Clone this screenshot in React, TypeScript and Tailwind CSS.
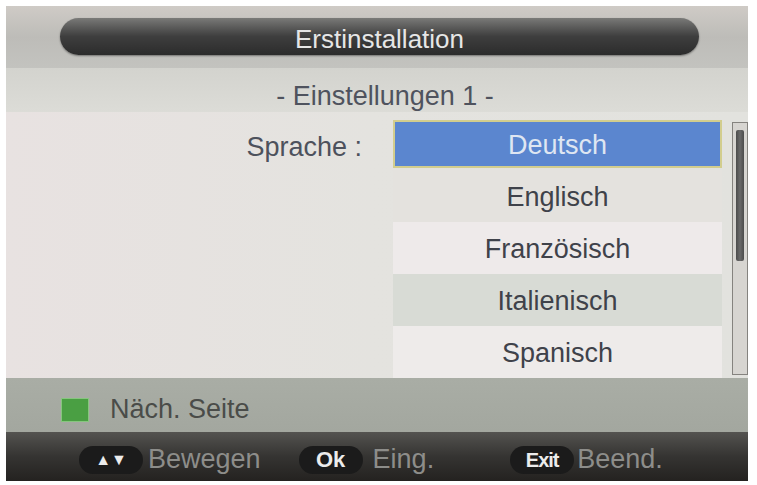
import React from 'react'

const languages = [
  { name: 'Deutsch', bg: '' },
  { name: 'Englisch', bg: 'bg-[#e4e2de]' },
  { name: 'Französisch', bg: 'bg-[#eeeaea]' },
  { name: 'Italienisch', bg: 'bg-[#d8dbd5]' },
  { name: 'Spanisch', bg: 'bg-[#eeebea]' },
]

function KeyPill({ children }: { children: React.ReactNode }) {
  return (
    <span className="flex h-[28px] w-[64px] items-center justify-center rounded-full bg-[#1b1b1b] text-[22px] font-bold text-[#ececec]">
      {children}
    </span>
  )
}

export default function App() {
  return (
    <div className="h-[485px] w-[757px] bg-white pl-[6px] pt-[6px] font-['Liberation_Sans',Arial,sans-serif]">
      <div className="flex h-[475px] w-[742px] flex-col overflow-hidden">
        {/* title bar */}
        <div className="flex h-[62px] items-center bg-gradient-to-b from-[#cfcbc6] via-[#bdbcb8] to-[#c3c3bf] pl-[54px]">
          <div className="flex h-[37px] w-[639px] items-center justify-center rounded-full bg-gradient-to-b from-[#7a7a78] via-[#3e3e3e] to-[#2c2c2c] pt-[4px] shadow-[0_1px_2px_rgba(0,0,0,0.4)]">
            <span className="text-[26px] leading-none text-[#e6e6e6]">Erstinstallation</span>
          </div>
        </div>

        {/* subtitle */}
        <div className="flex h-[45px] items-center justify-center bg-gradient-to-b from-[#d3d3ce] to-[#dcdcd7] pl-[16px] pt-[12px]">
          <span className="text-[27px] leading-none text-[#4f535e]">- Einstellungen 1 -</span>
        </div>

        {/* content */}
        <div className="flex h-[266px] bg-gradient-to-r from-[#e8e2e1] via-[#e4e3df] to-[#e2e2de]">
          <div className="flex w-[387px] justify-end pr-[31px] pt-[22px]">
            <span className="text-[27px] leading-none text-[#4d515c]">Sprache :</span>
          </div>
          <div className="flex w-[329px] flex-col pt-[6px]">
            {languages.map((l, i) =>
              i === 0 ? (
                <div key={l.name} className="flex h-[52px] items-center">
                  <div className="flex h-[48px] w-full items-center justify-center border-2 border-[#d2cd8e] bg-[#5b86cf] pt-[2px]">
                    <span className="text-[27px] leading-none text-[#dfe6f2]">{l.name}</span>
                  </div>
                </div>
              ) : (
                <div key={l.name} className={`flex h-[52px] items-center justify-center pt-[3px] ${l.bg}`}>
                  <span className="text-[27px] leading-none text-[#3f424a]">{l.name}</span>
                </div>
              )
            )}
          </div>
          <div className="flex w-[26px] pl-[10px] pt-[10px] pb-[2px]">
            <div className="flex h-[253px] w-[18px] flex-col border border-[#85837f] bg-[#d7d5d1] px-[3px] pt-[7px]">
              <div className="h-[131px] w-full rounded-[2px] bg-gradient-to-r from-[#4c4c4c] via-[#6a6a6a] to-[#4c4c4c]" />
            </div>
          </div>
        </div>

        {/* status */}
        <div className="flex h-[54px] items-center gap-[21px] bg-gradient-to-b from-[#a9ada5] to-[#a3a79f] pl-[55px] pt-[9px]">
          <span className="h-[24px] w-[28px] border border-[#86c67e] bg-[#4a9f43]" />
          <span className="text-[27px] leading-none text-[#4a4c49]">Näch. Seite</span>
        </div>

        {/* footer */}
        <div className="flex h-[49px] items-center bg-gradient-to-b from-[#545350] via-[#353432] to-[#242220] pl-[73px] pt-[6px] text-[27px] leading-none text-[#8d8d8a]">
          <KeyPill>
            <span className="text-[16px] tracking-[0px]">▲▼</span>
          </KeyPill>
          <span className="ml-[5px]">Bewegen</span>
          <span className="ml-[38px]">
            <KeyPill>Ok</KeyPill>
          </span>
          <span className="ml-[10px]">Eing.</span>
          <span className="ml-[76px]">
            <KeyPill>
              <span className="text-[20px] tracking-[-1px]">Exit</span>
            </KeyPill>
          </span>
          <span className="ml-[3px]">Beend.</span>
        </div>
      </div>
    </div>
  )
}
